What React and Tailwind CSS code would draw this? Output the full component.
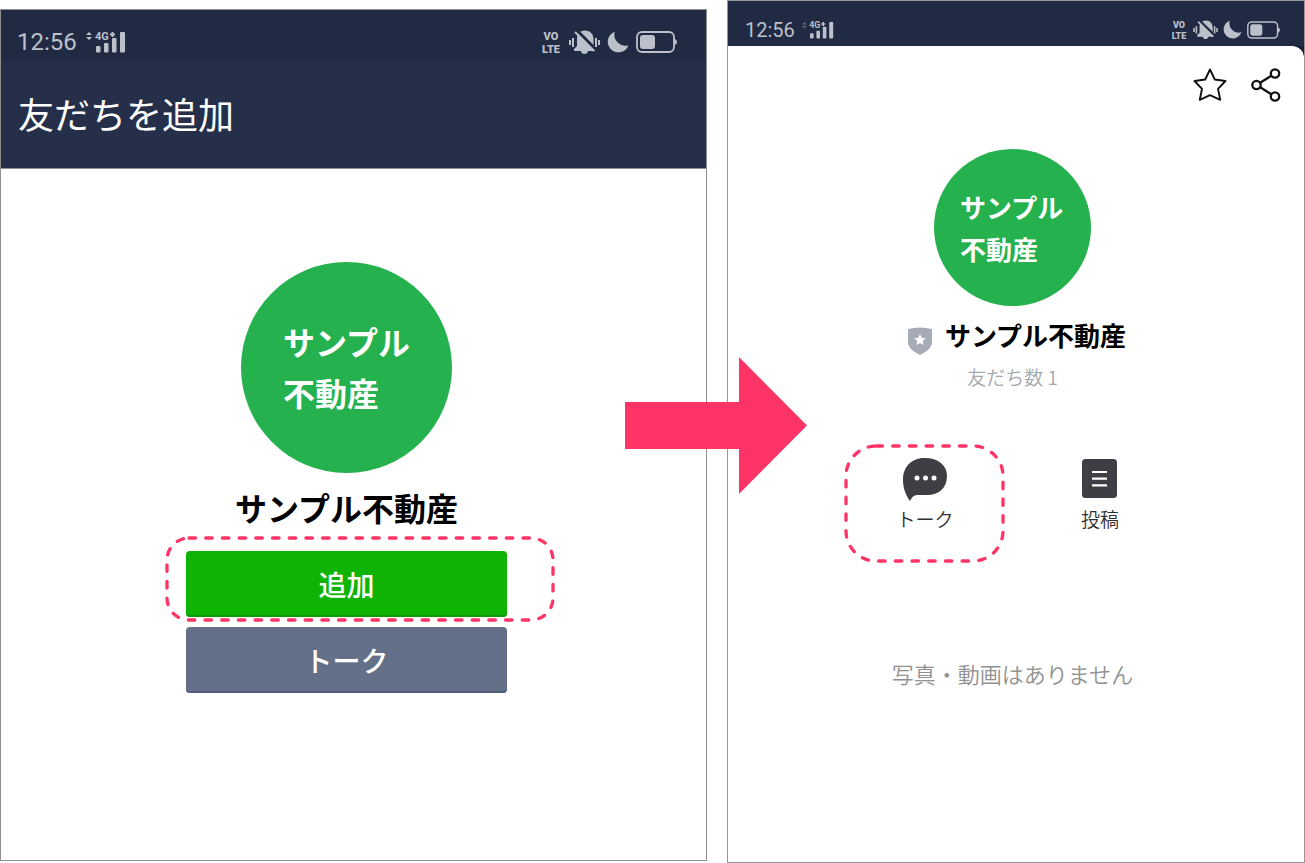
function Signal({ className, arrows }) {
  return (
    <svg viewBox="0 0 40 22" className={className} fill="currentColor" aria-hidden="true">
      <path d="M0 4L3 1L6 4ZM0 6H6L3 9Z" className={arrows} />
      <text x="9" y="9" fontSize="11" fontWeight="700" fontFamily="Roboto, sans-serif">4G</text>
      <path d="M24 2.500h1.500V1h2v1.500H29v2h-1.500V6h-2V4.500H24Z" />
      <rect x="10" y="15" width="4.500" height="6.500" rx="1" />
      <rect x="18" y="12" width="4.500" height="9.500" rx="1" />
      <rect x="26" y="7" width="4.500" height="14.500" rx="1" />
      <rect x="34" y="1" width="5" height="20.500" rx="1" />
    </svg>
  )
}

function VoLte({ className }) {
  return (
    <svg viewBox="0 0 22 24" className={className} fill="currentColor" aria-hidden="true">
      <g fontSize="11" fontWeight="900" fontFamily="Roboto, sans-serif" textAnchor="middle">
        <text x="11" y="10">VO</text>
        <text x="11" y="23">LTE</text>
      </g>
    </svg>
  )
}

function MutedBell({ className }) {
  return (
    <svg viewBox="0 0 31 24" className={className} aria-hidden="true">
      <path
        d="M16 0.500C21 0.500 24.500 4 24.500 9V16L26 19V21H19C19 23 17 24 15.500 24S12 23 12 21H5V19L8 16V9C8 4 11 0.500 16 0.500Z"
        fill="currentColor"
      />
      <path d="M7 -0.500L29 21.500" stroke="#212a43" strokeWidth="3" />
      <path d="M6 2L25 21" stroke="currentColor" strokeWidth="2" />
      <path d="M1 10V15M4 8V17M27 8V17M30 10V15" stroke="currentColor" strokeWidth="2" />
    </svg>
  )
}

function Moon({ className }) {
  return (
    <svg viewBox="0 0 24 24" className={className} fill="currentColor" aria-hidden="true">
      <path d="M8.500 0.800A11.600 11.600 0 1 0 23.400 15.500A12 12 0 0 1 8.500 0.800Z" />
    </svg>
  )
}

function Battery({ className }) {
  return (
    <svg viewBox="0 0 41 22" className={className} aria-hidden="true">
      <rect x="1" y="1" width="37" height="20" rx="5" fill="none" stroke="currentColor" strokeWidth="1.800" />
      <rect x="4" y="4" width="15" height="14" rx="3" fill="currentColor" />
      <path d="M38 8C40 8 41 10 41 11S40 14 38 14Z" fill="currentColor" />
    </svg>
  )
}

function TopBar({ small }) {
  if (small) {
    return (
      <div className="flex h-[45px] items-center bg-[#212a43] pt-3 pr-6 pl-[17px] text-[#bcc0ca]">
        <span className="font-[Roboto,sans-serif] text-xl">12:56</span>
        <Signal className="ml-[7px] h-[18px] w-8" arrows="opacity-40" />
        <div className="ml-auto flex items-center gap-[5px]">
          <VoLte className="h-5 w-[18px] overflow-visible" />
          <MutedBell className="h-[19px] w-[25px]" />
          <Moon className="h-[19px] w-[19px]" />
          <Battery className="h-[18px] w-[33px]" />
        </div>
      </div>
    )
  }
  return (
    <div className="flex h-[51px] items-center bg-[#212a43] pt-3 pr-[29px] pl-4 text-[#bcc0ca]">
      <span className="font-[Roboto,sans-serif] text-2xl">12:56</span>
      <Signal className="ml-[9px] h-[22px] w-10" />
      <div className="ml-auto flex items-center gap-[7px]">
        <VoLte className="h-6 w-[22px] overflow-visible" />
        <MutedBell className="h-6 w-[31px]" />
        <Moon className="h-[22px] w-[22px]" />
        <Battery className="h-[22px] w-[41px]" />
      </div>
    </div>
  )
}

function DashedFrame({ className, radius }) {
  return (
    <svg className={className} aria-hidden="true">
      <rect
        width="100%"
        height="100%"
        rx={radius}
        fill="none"
        stroke="#ff3466"
        strokeWidth="3.300"
        strokeLinecap="round"
        strokeDasharray="6.500 10.200"
      />
    </svg>
  )
}

function AddFriend() {
  return (
    <section className="mt-[9px] mb-[2px] flex flex-col border border-[#8f8f8f] bg-white">
      <TopBar />
      <header className="flex h-[108px] items-center border-b border-[#8f8f8f] bg-[#262f4a] pb-1 pl-[17px]">
        <h1 className="text-4xl font-normal text-white">友だちを追加</h1>
      </header>
      <div className="flex flex-col items-center pt-[93px] pr-[14px]">
        <div className="flex h-[211px] w-[211px] flex-col justify-center rounded-full bg-[#25b14d] pb-[2px] pl-[42px] text-[32px] leading-[51px] font-bold text-white">
          <p>サンプル</p>
          <p>不動産</p>
        </div>
        <h2 className="mb-[10px] text-[32px] leading-[68px] font-bold text-black">サンプル不動産</h2>
        <div className="flex w-[321px] flex-col gap-[10px] text-[28px] font-medium text-white">
          <div className="relative">
            <button className="h-[66px] w-full rounded bg-[#0fb304] shadow-[inset_0_-2px_0_#0d9c0a]">追加</button>
            <DashedFrame
              radius="22"
              className="pointer-events-none absolute -top-[13px] -left-[19px] h-[82px] w-[386px] overflow-visible"
            />
          </div>
          <button className="h-[66px] w-full rounded bg-[#647088] shadow-[inset_0_-2px_0_#505f80]">トーク</button>
        </div>
      </div>
    </section>
  )
}

function Profile() {
  return (
    <section className="relative flex flex-col border border-[#979797] bg-[#172038]">
      <TopBar small />
      <div className="flex flex-1 flex-col rounded-tr-xl bg-white">
        <div className="flex justify-end gap-6 pt-[22px] pr-[23px]">
          <button aria-label="お気に入り">
            <svg viewBox="0 0 34 34" className="h-[34px] w-[34px]" fill="none" stroke="#111" strokeWidth="1.900" strokeLinejoin="round">
              <path d="M17 1.500L21.800 11.500L32.500 13L25 20.800L27.200 31.800L17 27.200L6.800 31.800L9 20.800L1.500 13L12.200 11.500Z" />
            </svg>
          </button>
          <button aria-label="シェア">
            <svg viewBox="0 0 30 34" className="h-[34px] w-[30px]" fill="none" stroke="#111" strokeWidth="2.300">
              <circle cx="24" cy="5.500" r="4.200" />
              <circle cx="5.500" cy="17" r="4.200" />
              <circle cx="24" cy="28.500" r="4.200" />
              <path d="M9.200 14.800L20.300 7.800M9.200 19.200L20.300 26.200" />
            </svg>
          </button>
        </div>
        <div className="flex flex-col items-center pt-[47px] pr-[7px]">
          <div className="flex h-[157px] w-[157px] flex-col justify-center rounded-full bg-[#25b14d] pl-[26px] text-[26px] leading-[42px] font-bold text-white">
            <p>サンプル</p>
            <p>不動産</p>
          </div>
          <div className="flex items-center gap-3 pt-2 pl-2">
            <svg viewBox="0 0 26 28" className="mt-3 h-7 w-[26px]" aria-hidden="true">
              <path d="M1 2Q13 -1 25 2V15C25 21 19 25 13 28C7 25 1 21 1 15Z" fill="#a6abb5" />
              <path
                d="M13 7L14.700 10.800L18.800 11.200L15.700 14L16.600 18L13 15.900L9.400 18L10.300 14L7.200 11.200L11.300 10.800Z"
                fill="#fff"
              />
            </svg>
            <h2 className="text-[26px] leading-[42px] font-bold text-black">サンプル不動産</h2>
          </div>
          <p className="pt-[6px] text-[19px] leading-[30px] font-[350] text-[#a4a7ad]">友だち数 1</p>
          <div className="mt-[52px] flex gap-[15px] text-[19px] leading-7 font-[350] text-[#303135]">
            <div className="relative flex w-40 justify-center">
              <button className="flex flex-col items-center pt-[14px]">
                <svg viewBox="0 0 44 43" className="h-[43px] w-11" aria-hidden="true">
                  <path
                    d="M22 0C35 0 44 7 44 18C44 30 36 37 24 37H15C11 37 9 39 7 43C2 36 0 29 0 22C0 8 9 0 22 0Z"
                    fill="#3e3f44"
                  />
                  <path d="M14 20h.01M22.500 20h.01M31 20h.01" stroke="#fff" strokeWidth="5" strokeLinecap="round" />
                </svg>
                <span className="mt-1">トーク</span>
              </button>
              <DashedFrame
                radius="30"
                className="pointer-events-none absolute top-[2px] left-[1px] h-[115px] w-[157px] overflow-visible"
              />
            </div>
            <div className="flex w-40 justify-center">
              <button className="flex flex-col items-center pt-[15px]">
                <svg viewBox="0 0 35 39" className="h-[39px] w-[35px]" aria-hidden="true">
                  <rect width="35" height="39" rx="3.500" fill="#3e3f44" />
                  <path d="M10 13H25M10 19.700H25M10 26.300H25" stroke="#fff" strokeWidth="2.200" />
                </svg>
                <span className="mt-[7px]">投稿</span>
              </button>
            </div>
          </div>
          <p className="pt-[124px] text-[22px] leading-8 font-[350] text-[#919191]">写真・動画はありません</p>
        </div>
      </div>
      <svg
        viewBox="0 0 182 137"
        className="absolute top-[356px] -left-[103px] h-[137px] w-[182px]"
        fill="#ff3466"
        aria-hidden="true"
      >
        <path d="M0 45H114V0L182 68.500L114 137V92H0Z" />
      </svg>
    </section>
  )
}

export default function App() {
  return (
    <main className="grid min-h-screen grid-cols-[707fr_578fr] gap-5 bg-white font-['Noto_Sans_CJK_JP',sans-serif]">
      <AddFriend />
      <Profile />
    </main>
  )
}
